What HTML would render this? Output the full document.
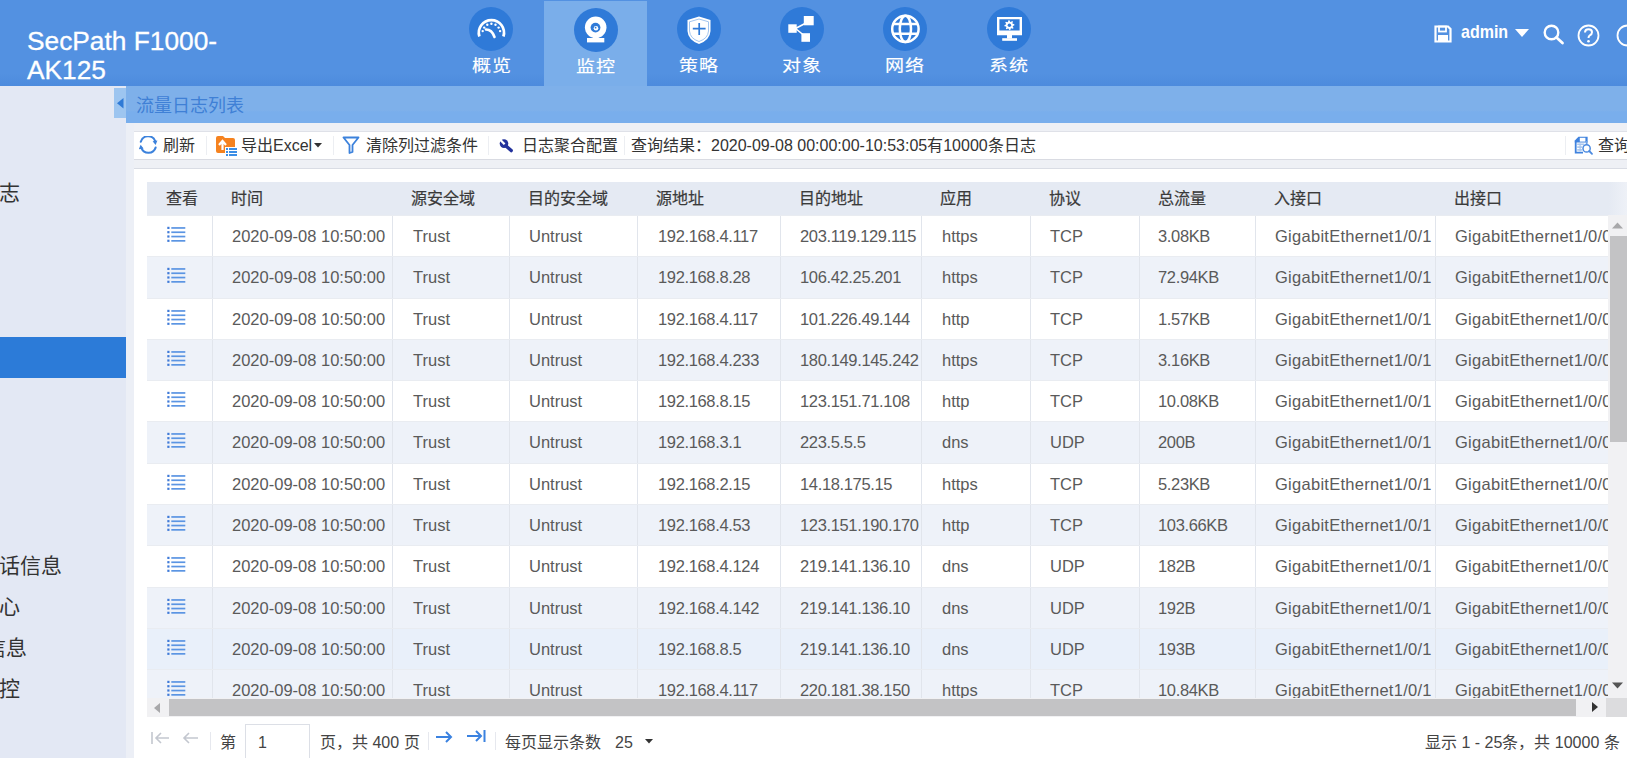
<!DOCTYPE html>
<html lang="zh-CN"><head><meta charset="utf-8">
<style>
*{box-sizing:border-box;margin:0;padding:0}
html,body{width:1627px;height:758px;overflow:hidden;background:#eef0f5;font-family:"Liberation Sans",sans-serif;color:#333}
.a{position:absolute}
#hdr{position:absolute;left:0;top:0;width:1627px;height:86px;background:linear-gradient(#5391e1 0,#5391e1 85%,#4d8bdd 100%)}
#logo{position:absolute;left:27px;top:27px;color:#fff;font-size:26.3px;line-height:28.5px;-webkit-text-stroke:0.3px #fff;white-space:nowrap}
.nav{position:absolute;top:0;width:103px;height:86px;color:#fff}
.nav.act{background:#7aaeea;top:1px;height:85px}
.nav .ic{position:absolute;left:29px;top:7px;width:44px;height:44px;border-radius:50%;background:#2f7ad8}
.nav .ic svg{position:absolute;left:0;top:0}
.nav .lb{position:absolute;left:0;width:103px;top:54px;font-size:18.5px;line-height:24px;text-align:center;font-weight:normal;-webkit-text-stroke:0.15px #fff;transform:scale(1.03,0.86);transform-origin:50% 10px}
#side{position:absolute;left:0;top:86px;width:126px;height:672px;background:#e3e8f4;overflow:hidden}
#side .it{position:absolute;left:0;font-size:21px;line-height:24px;color:#333;white-space:nowrap}
#side .sel{position:absolute;left:0;top:251px;width:126px;height:41px;background:#2c7bd8}
#strip{position:absolute;left:126px;top:123px;width:8px;height:635px;background:#eceff6}
#sub{position:absolute;left:126px;top:86px;width:1501px;height:37px;background:linear-gradient(#7eb0ea 0,#7eb0ea 66%,#79aeec 70%,#79aeec 100%)}
#sub .t{position:absolute;left:10px;top:8px;font-size:18px;line-height:24px;color:#3f80d6}
#tab{position:absolute;left:114px;top:88px;width:12px;height:30px;background:#9dc5f0}
#tb{position:absolute;left:134px;top:131px;width:1493px;height:29px;background:#fff;border-top:1px solid #dfe1e8;border-bottom:1px solid #d9dbe2}
#tb .x{position:absolute;top:2px;font-size:16px;line-height:24px;color:#333;white-space:nowrap}
#tb .sp{position:absolute;top:4px;width:1px;height:19px;background:#eceef2}
#tb svg{position:absolute}
#grid{position:absolute;left:134px;top:168px;width:1493px;height:590px;background:#fff;border-top:1px solid #d9dce4}
#thead{position:absolute;left:13px;top:13px;width:1480px;height:33px;background:linear-gradient(90deg,#e5eaf3 0,#e5eaf3 1462px,#eef1f7 1480px)}
.th{position:absolute;top:5.5px;font-size:16px;line-height:22px;color:#3a3a3a;white-space:nowrap;-webkit-text-stroke:0.2px #3a3a3a}
#tbody{position:absolute;left:13px;top:46px;width:1461px;height:484px;overflow:hidden}
.tr{position:absolute;left:0;width:1461px;background:#fff;border-top:1px solid #e9ecf1}
.tr.alt{background:#eef2f9}
.tr.hov{background:#e9f0fa}
.td{position:absolute;top:9px;font-size:16.5px;line-height:22px;color:#5a5a5a;white-space:nowrap}
.td .li{position:absolute;left:0;top:1px}
.sep{position:absolute;top:0;width:1px;height:100%;background:#e1e5ec}
#vs{position:absolute;left:1474px;top:46px;width:19px;height:484px;background:#f1f1f3}
#vs .th2{position:absolute;left:2px;top:21px;width:17px;height:206px;background:#c3c3c5}
#hs{position:absolute;left:13px;top:529px;width:1461px;height:19px;background:#f1f1f3}
#hs .th2{position:absolute;left:22px;top:1px;width:1407px;height:17px;background:#c3c3c5}
#corner{position:absolute;left:1472px;top:529px;width:21px;height:19px;background:#dcdcde}
#pg{position:absolute;left:0;top:549px;width:1493px;height:41px}
#pg .x{position:absolute;top:14px;font-size:16px;line-height:22px;color:#444;white-space:nowrap}
#pg .sp{position:absolute;top:14px;width:1px;height:18px;background:#e6e8ee}
#pg svg{position:absolute}

.td.ip{letter-spacing:-0.35px}
.td.ge{letter-spacing:0.27px}

</style></head>
<body>
<div id="hdr">
  <div id="logo">SecPath F1000-<br>AK125</div>
  <div class="nav" style="left:440px"><div class="ic"><svg width="44" height="44" viewBox="0 0 44 44"><path d="M10.4 29.5 A12.6 12.6 0 1 1 34.4 29.5" fill="none" stroke="#fff" stroke-width="2.7"/><path d="M17 22.5 Q23 22.5 25.5 30" fill="none" stroke="#fff" stroke-width="2.6" stroke-linecap="round"/><g fill="#fff"><circle cx="13.7" cy="24.1" r="1.2"/><circle cx="15.2" cy="20.6" r="1.2"/><circle cx="18.3" cy="17.8" r="1.2"/><circle cx="22.4" cy="16.8" r="1.2"/><circle cx="26.5" cy="17.8" r="1.2"/><circle cx="29.6" cy="20.6" r="1.2"/><circle cx="31.1" cy="24.1" r="1.2"/></g></svg></div><div class="lb">概览</div></div>
  <div class="nav act" style="left:544px"><div class="ic" style="left:30px;top:7px"><svg width="44" height="44" viewBox="0 0 44 44"><circle cx="21.7" cy="19.3" r="10.8" fill="#fff"/><circle cx="21.5" cy="19.6" r="4.9" fill="#2f7ad8"/><circle cx="22" cy="20.2" r="2.3" fill="#fff"/><circle cx="21.6" cy="19.7" r="0.9" fill="#2f7ad8"/><rect x="19" y="27" width="5.5" height="4" fill="#fff"/><rect x="13" y="30" width="17.3" height="4.4" fill="#fff"/></svg></div><div class="lb">监控</div></div>
  <div class="nav" style="left:647px"><div class="ic" style="left:30px"><svg width="44" height="44" viewBox="0 0 44 44"><path d="M22 9.5 L33.5 13 L33.5 24 Q33 33 22 37 Q11 33 10.5 24 L10.5 13 Z" fill="#fff"/><path d="M22 12 L31.5 14.8 L31.5 24 Q31 31.5 22 34.5 Q13 31.5 12.5 24 L12.5 14.8 Z" fill="none" stroke="#8bb6ea" stroke-width="0.8"/><path d="M22.2 16 V28 M15.8 21.6 H28.6" stroke="#2f7ad8" stroke-width="1.7"/></svg></div><div class="lb">策略</div></div>
  <div class="nav" style="left:750px"><div class="ic" style="left:30px"><svg width="44" height="44" viewBox="0 0 44 44"><g fill="#fff"><rect x="23.8" y="9" width="9.9" height="9.3"/><rect x="8.3" y="17.3" width="8.4" height="8.5"/><rect x="21.4" y="26.2" width="8.6" height="8.6"/></g><path d="M15.5 21.5 L25 16.5 M15.5 21.5 L23.5 28" stroke="#fff" stroke-width="1.6"/></svg></div><div class="lb">对象</div></div>
  <div class="nav" style="left:853px"><div class="ic" style="left:30px"><svg width="44" height="44" viewBox="0 0 44 44"><g fill="none" stroke="#fff" stroke-width="2.5"><circle cx="22.4" cy="21.9" r="13.2"/><ellipse cx="22.4" cy="21.9" rx="5.6" ry="13.2"/><path d="M9.8 17.1 H35 M9.8 26.7 H35"/></g></svg></div><div class="lb">网络</div></div>
  <div class="nav" style="left:957px"><div class="ic" style="left:29.5px"><svg width="44" height="44" viewBox="0 0 44 44"><path d="M10 10 H35 V28.2 H10 Z M12.4 12.2 V23.6 H32.6 V12.2 Z" fill="#fff" fill-rule="evenodd"/><rect x="20" y="28" width="5" height="3.5" fill="#fff"/><rect x="15.2" y="31.2" width="14.8" height="2.6" fill="#fff"/><path d="M27.31 17.25 L27.40 18.22 L25.93 18.92 L25.72 19.59 L26.55 21.00 L25.92 21.75 L24.39 21.20 L23.76 21.53 L23.35 23.11 L22.38 23.20 L21.68 21.73 L21.01 21.52 L19.60 22.35 L18.85 21.72 L19.40 20.19 L19.07 19.56 L17.49 19.15 L17.40 18.18 L18.87 17.48 L19.08 16.81 L18.25 15.40 L18.88 14.65 L20.41 15.20 L21.04 14.87 L21.45 13.29 L22.42 13.20 L23.12 14.67 L23.79 14.88 L25.20 14.05 L25.95 14.68 L25.40 16.21 L25.73 16.84 Z" fill="#fff"/><circle cx="22.4" cy="18.2" r="1.7" fill="#2f7ad8"/></svg></div><div class="lb">系统</div></div>
  <svg class="a" style="left:1434px;top:25px" width="18" height="18" viewBox="0 0 18 18"><path d="M1.5 1.5 H14 L16.5 4 V16.5 H1.5 Z" fill="none" stroke="#fff" stroke-width="2.2"/><rect x="5" y="1.5" width="7" height="5" fill="none" stroke="#fff" stroke-width="1.8"/><rect x="4" y="10" width="10" height="6.5" fill="#fff"/></svg>
  <div class="a" style="left:1461px;top:22px;font-size:16px;line-height:24px;color:#fff;font-weight:bold;transform:scaleY(1.12);transform-origin:0 100%">admin</div>
  <svg class="a" style="left:1515px;top:29px" width="15" height="9" viewBox="0 0 15 9"><path d="M0 0 H14 L7 8 Z" fill="#fff"/></svg>
  <svg class="a" style="left:1543px;top:24px" width="22" height="21" viewBox="0 0 22 21"><circle cx="8.5" cy="8.5" r="6.8" fill="none" stroke="#fff" stroke-width="2.4"/><path d="M13.5 13.5 L19.5 19" stroke="#fff" stroke-width="2.8" stroke-linecap="round"/></svg>
  <svg class="a" style="left:1577px;top:24px" width="23" height="23" viewBox="0 0 23 23"><circle cx="11.5" cy="11.5" r="10" fill="none" stroke="#fff" stroke-width="1.8"/><path d="M8 8.5 Q8 5.2 11.5 5.2 Q15 5.2 15 8.3 Q15 10.3 12.8 11.3 Q11.5 12 11.5 14" fill="none" stroke="#fff" stroke-width="2"/><circle cx="11.5" cy="17.2" r="1.3" fill="#fff"/></svg>
  <svg class="a" style="left:1616px;top:24px" width="23" height="23" viewBox="0 0 23 23"><circle cx="11.5" cy="11.5" r="10" fill="none" stroke="#fff" stroke-width="1.8"/></svg>
</div>
<div id="side">
  <div class="it" style="left:-1px;top:95px">志</div>
  <div class="sel"></div>
  <div class="it" style="left:-1px;top:468px">话信息</div>
  <div class="it" style="left:-1px;top:509px">心</div>
  <div class="it" style="left:-15px;top:550px">信息</div>
  <div class="it" style="left:-1px;top:591px">控</div>
</div>
<div id="strip"></div>
<div id="sub"><div class="t">流量日志列表</div></div>
<div id="tab"><svg class="a" style="left:3px;top:10px" width="7" height="11" viewBox="0 0 7 11"><path d="M6.5 0 V10.5 L0 5.2 Z" fill="#2f7ad6"/></svg></div>
<div id="tb">
  <svg style="left:5px;top:4px" width="20" height="18" viewBox="0 0 20 18"><g fill="none" stroke="#3c82dc" stroke-width="2.1" stroke-linecap="round"><path d="M1.8 5.8 A7.6 7.6 0 0 1 16.2 5.2"/><path d="M16.6 11.6 A7.6 7.6 0 0 1 2.4 12.2"/></g><path d="M13.6 5.2 L18.4 4.6 L16.6 9 Z" fill="#3c82dc"/><path d="M4.6 12.6 L-0.2 13.2 L1.6 8.8 Z" fill="#3c82dc"/></svg>
  <div class="x" style="left:29px">刷新</div>
  <div class="sp" style="left:72px"></div>
  <svg style="left:82px;top:3px" width="21" height="22" viewBox="0 0 21 22"><path d="M0 3 Q0 1 2 1 H7 L9 3 H17 Q19 3 19 5 V16 Q19 18 17 18 H2 Q0 18 0 16 Z" fill="#f5821f"/><path d="M6.5 15 V7 M3 10 L6.5 6 L10 10" fill="none" stroke="#fff" stroke-width="2.2"/><g fill="#3b8ee6"><rect x="9" y="12" width="12" height="10" fill="#fff"/><rect x="10" y="13" width="2" height="2"/><rect x="13" y="13" width="8" height="2"/><rect x="10" y="16" width="2" height="2"/><rect x="13" y="16" width="8" height="2"/><rect x="10" y="19" width="2" height="2"/><rect x="13" y="19" width="8" height="2"/></g></svg>
  <div class="x" style="left:107px">导出Excel</div>
  <svg style="left:180px;top:11px" width="8" height="5" viewBox="0 0 8 5"><path d="M0 0 H8 L4 4.5 Z" fill="#333"/></svg>
  <div class="sp" style="left:199px"></div>
  <svg style="left:208px;top:4px" width="18" height="18" viewBox="0 0 18 18"><path d="M1.5 1.5 H16.5 L10.5 9 V16 L7.5 17 V9 Z" fill="none" stroke="#3c82dc" stroke-width="1.8" stroke-linejoin="round"/></svg>
  <div class="x" style="left:232px">清除列过滤条件</div>
  <div class="sp" style="left:354px"></div>
  <svg style="left:365px;top:6px" width="15" height="15" viewBox="0 0 15 15"><path d="M6.5 7.5 L12.2 12.6" stroke="#23329c" stroke-width="3.4" stroke-linecap="round"/><circle cx="5" cy="5.6" r="4.3" fill="#23329c"/><path d="M5.6 6.2 L1.2 1.8" stroke="#fff" stroke-width="2.3"/></svg>
  <div class="x" style="left:388px">日志聚合配置</div>
  <div class="sp" style="left:490px"></div>
  <div class="x" style="left:497px">查询结果：2020-09-08 00:00:00-10:53:05有10000条日志</div>
  <div class="sp" style="left:1431px"></div>
  <svg style="left:1440px;top:4px" width="20" height="20" viewBox="0 0 20 20"><path d="M0.8 4.5 L4.5 0.8 H13.6 V6.5 H0.8 Z" fill="#3f82de"/><rect x="5.8" y="1.8" width="5.6" height="3.8" fill="#fff"/><path d="M1.7 5 V16.6 H9" fill="none" stroke="#3f82de" stroke-width="1.8"/><path d="M12.7 5 V8.5" stroke="#6fa2e6" stroke-width="1.8"/><g fill="#a9c6ee"><rect x="3.2" y="7.5" width="7" height="1.6"/><rect x="3.2" y="10.3" width="5" height="1.6"/><rect x="3.2" y="13.1" width="5" height="1.6"/><rect x="5.5" y="7.5" width="1.2" height="8"/></g><circle cx="12.6" cy="12.4" r="3.6" fill="#fff" stroke="#4b8ae0" stroke-width="1.5"/><path d="M15.2 15 L18 17.8" stroke="#4b8ae0" stroke-width="1.8" stroke-linecap="round"/></svg>
  <div class="x" style="left:1464px">查询</div>
</div>
<div id="grid">
<div id="thead"><span class="th" style="left:18.5px">查看</span><span class="th" style="left:83.5px">时间</span><span class="th" style="left:263.5px">源安全域</span><span class="th" style="left:380.5px">目的安全域</span><span class="th" style="left:508.5px">源地址</span><span class="th" style="left:651.5px">目的地址</span><span class="th" style="left:792.5px">应用</span><span class="th" style="left:901.5px">协议</span><span class="th" style="left:1010.5px">总流量</span><span class="th" style="left:1126.5px">入接口</span><span class="th" style="left:1306.5px">出接口</span></div>
<div id="tbody">
<div class="tr" style="top:0px;height:41px"><span class="td" style="left:20px"><svg class="li" width="19" height="16" viewBox="0 0 19 16"><g fill="#3f7ad8"><rect x="0.3" y="0.8" width="2.2" height="2.2"/><rect x="0.3" y="5.1" width="2.2" height="2.2"/><rect x="0.3" y="9.4" width="2.2" height="2.2"/><rect x="0.3" y="13.7" width="2.2" height="2.2"/></g><g fill="#5b95e3"><rect x="4.3" y="1.1" width="14" height="1.7"/><rect x="4.3" y="5.4" width="14" height="1.7"/><rect x="4.3" y="9.7" width="14" height="1.7"/><rect x="4.3" y="14" width="14" height="1.7"/></g></svg></span><span class="sep" style="left:65px"></span><span class="td" style="left:85px">2020-09-08 10:50:00</span><span class="sep" style="left:245px"></span><span class="td" style="left:266px">Trust</span><span class="sep" style="left:362px"></span><span class="td" style="left:382px">Untrust</span><span class="sep" style="left:490px"></span><span class="td ip" style="left:511px">192.168.4.117</span><span class="sep" style="left:633px"></span><span class="td ip" style="left:653px">203.119.129.115</span><span class="sep" style="left:774px"></span><span class="td" style="left:795px">https</span><span class="sep" style="left:883px"></span><span class="td" style="left:903px">TCP</span><span class="sep" style="left:992px"></span><span class="td ip" style="left:1011px">3.08KB</span><span class="sep" style="left:1108px"></span><span class="td ge" style="left:1128px">GigabitEthernet1/0/1</span><span class="sep" style="left:1288px"></span><span class="td ge" style="left:1308px">GigabitEthernet1/0/0</span></div>
<div class="tr alt" style="top:41px;height:42px"><span class="td" style="left:20px"><svg class="li" width="19" height="16" viewBox="0 0 19 16"><g fill="#3f7ad8"><rect x="0.3" y="0.8" width="2.2" height="2.2"/><rect x="0.3" y="5.1" width="2.2" height="2.2"/><rect x="0.3" y="9.4" width="2.2" height="2.2"/><rect x="0.3" y="13.7" width="2.2" height="2.2"/></g><g fill="#5b95e3"><rect x="4.3" y="1.1" width="14" height="1.7"/><rect x="4.3" y="5.4" width="14" height="1.7"/><rect x="4.3" y="9.7" width="14" height="1.7"/><rect x="4.3" y="14" width="14" height="1.7"/></g></svg></span><span class="sep" style="left:65px"></span><span class="td" style="left:85px">2020-09-08 10:50:00</span><span class="sep" style="left:245px"></span><span class="td" style="left:266px">Trust</span><span class="sep" style="left:362px"></span><span class="td" style="left:382px">Untrust</span><span class="sep" style="left:490px"></span><span class="td ip" style="left:511px">192.168.8.28</span><span class="sep" style="left:633px"></span><span class="td ip" style="left:653px">106.42.25.201</span><span class="sep" style="left:774px"></span><span class="td" style="left:795px">https</span><span class="sep" style="left:883px"></span><span class="td" style="left:903px">TCP</span><span class="sep" style="left:992px"></span><span class="td ip" style="left:1011px">72.94KB</span><span class="sep" style="left:1108px"></span><span class="td ge" style="left:1128px">GigabitEthernet1/0/1</span><span class="sep" style="left:1288px"></span><span class="td ge" style="left:1308px">GigabitEthernet1/0/0</span></div>
<div class="tr" style="top:83px;height:41px"><span class="td" style="left:20px"><svg class="li" width="19" height="16" viewBox="0 0 19 16"><g fill="#3f7ad8"><rect x="0.3" y="0.8" width="2.2" height="2.2"/><rect x="0.3" y="5.1" width="2.2" height="2.2"/><rect x="0.3" y="9.4" width="2.2" height="2.2"/><rect x="0.3" y="13.7" width="2.2" height="2.2"/></g><g fill="#5b95e3"><rect x="4.3" y="1.1" width="14" height="1.7"/><rect x="4.3" y="5.4" width="14" height="1.7"/><rect x="4.3" y="9.7" width="14" height="1.7"/><rect x="4.3" y="14" width="14" height="1.7"/></g></svg></span><span class="sep" style="left:65px"></span><span class="td" style="left:85px">2020-09-08 10:50:00</span><span class="sep" style="left:245px"></span><span class="td" style="left:266px">Trust</span><span class="sep" style="left:362px"></span><span class="td" style="left:382px">Untrust</span><span class="sep" style="left:490px"></span><span class="td ip" style="left:511px">192.168.4.117</span><span class="sep" style="left:633px"></span><span class="td ip" style="left:653px">101.226.49.144</span><span class="sep" style="left:774px"></span><span class="td" style="left:795px">http</span><span class="sep" style="left:883px"></span><span class="td" style="left:903px">TCP</span><span class="sep" style="left:992px"></span><span class="td ip" style="left:1011px">1.57KB</span><span class="sep" style="left:1108px"></span><span class="td ge" style="left:1128px">GigabitEthernet1/0/1</span><span class="sep" style="left:1288px"></span><span class="td ge" style="left:1308px">GigabitEthernet1/0/0</span></div>
<div class="tr alt" style="top:124px;height:41px"><span class="td" style="left:20px"><svg class="li" width="19" height="16" viewBox="0 0 19 16"><g fill="#3f7ad8"><rect x="0.3" y="0.8" width="2.2" height="2.2"/><rect x="0.3" y="5.1" width="2.2" height="2.2"/><rect x="0.3" y="9.4" width="2.2" height="2.2"/><rect x="0.3" y="13.7" width="2.2" height="2.2"/></g><g fill="#5b95e3"><rect x="4.3" y="1.1" width="14" height="1.7"/><rect x="4.3" y="5.4" width="14" height="1.7"/><rect x="4.3" y="9.7" width="14" height="1.7"/><rect x="4.3" y="14" width="14" height="1.7"/></g></svg></span><span class="sep" style="left:65px"></span><span class="td" style="left:85px">2020-09-08 10:50:00</span><span class="sep" style="left:245px"></span><span class="td" style="left:266px">Trust</span><span class="sep" style="left:362px"></span><span class="td" style="left:382px">Untrust</span><span class="sep" style="left:490px"></span><span class="td ip" style="left:511px">192.168.4.233</span><span class="sep" style="left:633px"></span><span class="td ip" style="left:653px">180.149.145.242</span><span class="sep" style="left:774px"></span><span class="td" style="left:795px">https</span><span class="sep" style="left:883px"></span><span class="td" style="left:903px">TCP</span><span class="sep" style="left:992px"></span><span class="td ip" style="left:1011px">3.16KB</span><span class="sep" style="left:1108px"></span><span class="td ge" style="left:1128px">GigabitEthernet1/0/1</span><span class="sep" style="left:1288px"></span><span class="td ge" style="left:1308px">GigabitEthernet1/0/0</span></div>
<div class="tr" style="top:165px;height:41px"><span class="td" style="left:20px"><svg class="li" width="19" height="16" viewBox="0 0 19 16"><g fill="#3f7ad8"><rect x="0.3" y="0.8" width="2.2" height="2.2"/><rect x="0.3" y="5.1" width="2.2" height="2.2"/><rect x="0.3" y="9.4" width="2.2" height="2.2"/><rect x="0.3" y="13.7" width="2.2" height="2.2"/></g><g fill="#5b95e3"><rect x="4.3" y="1.1" width="14" height="1.7"/><rect x="4.3" y="5.4" width="14" height="1.7"/><rect x="4.3" y="9.7" width="14" height="1.7"/><rect x="4.3" y="14" width="14" height="1.7"/></g></svg></span><span class="sep" style="left:65px"></span><span class="td" style="left:85px">2020-09-08 10:50:00</span><span class="sep" style="left:245px"></span><span class="td" style="left:266px">Trust</span><span class="sep" style="left:362px"></span><span class="td" style="left:382px">Untrust</span><span class="sep" style="left:490px"></span><span class="td ip" style="left:511px">192.168.8.15</span><span class="sep" style="left:633px"></span><span class="td ip" style="left:653px">123.151.71.108</span><span class="sep" style="left:774px"></span><span class="td" style="left:795px">http</span><span class="sep" style="left:883px"></span><span class="td" style="left:903px">TCP</span><span class="sep" style="left:992px"></span><span class="td ip" style="left:1011px">10.08KB</span><span class="sep" style="left:1108px"></span><span class="td ge" style="left:1128px">GigabitEthernet1/0/1</span><span class="sep" style="left:1288px"></span><span class="td ge" style="left:1308px">GigabitEthernet1/0/0</span></div>
<div class="tr alt" style="top:206px;height:42px"><span class="td" style="left:20px"><svg class="li" width="19" height="16" viewBox="0 0 19 16"><g fill="#3f7ad8"><rect x="0.3" y="0.8" width="2.2" height="2.2"/><rect x="0.3" y="5.1" width="2.2" height="2.2"/><rect x="0.3" y="9.4" width="2.2" height="2.2"/><rect x="0.3" y="13.7" width="2.2" height="2.2"/></g><g fill="#5b95e3"><rect x="4.3" y="1.1" width="14" height="1.7"/><rect x="4.3" y="5.4" width="14" height="1.7"/><rect x="4.3" y="9.7" width="14" height="1.7"/><rect x="4.3" y="14" width="14" height="1.7"/></g></svg></span><span class="sep" style="left:65px"></span><span class="td" style="left:85px">2020-09-08 10:50:00</span><span class="sep" style="left:245px"></span><span class="td" style="left:266px">Trust</span><span class="sep" style="left:362px"></span><span class="td" style="left:382px">Untrust</span><span class="sep" style="left:490px"></span><span class="td ip" style="left:511px">192.168.3.1</span><span class="sep" style="left:633px"></span><span class="td ip" style="left:653px">223.5.5.5</span><span class="sep" style="left:774px"></span><span class="td" style="left:795px">dns</span><span class="sep" style="left:883px"></span><span class="td" style="left:903px">UDP</span><span class="sep" style="left:992px"></span><span class="td ip" style="left:1011px">200B</span><span class="sep" style="left:1108px"></span><span class="td ge" style="left:1128px">GigabitEthernet1/0/1</span><span class="sep" style="left:1288px"></span><span class="td ge" style="left:1308px">GigabitEthernet1/0/0</span></div>
<div class="tr" style="top:248px;height:41px"><span class="td" style="left:20px"><svg class="li" width="19" height="16" viewBox="0 0 19 16"><g fill="#3f7ad8"><rect x="0.3" y="0.8" width="2.2" height="2.2"/><rect x="0.3" y="5.1" width="2.2" height="2.2"/><rect x="0.3" y="9.4" width="2.2" height="2.2"/><rect x="0.3" y="13.7" width="2.2" height="2.2"/></g><g fill="#5b95e3"><rect x="4.3" y="1.1" width="14" height="1.7"/><rect x="4.3" y="5.4" width="14" height="1.7"/><rect x="4.3" y="9.7" width="14" height="1.7"/><rect x="4.3" y="14" width="14" height="1.7"/></g></svg></span><span class="sep" style="left:65px"></span><span class="td" style="left:85px">2020-09-08 10:50:00</span><span class="sep" style="left:245px"></span><span class="td" style="left:266px">Trust</span><span class="sep" style="left:362px"></span><span class="td" style="left:382px">Untrust</span><span class="sep" style="left:490px"></span><span class="td ip" style="left:511px">192.168.2.15</span><span class="sep" style="left:633px"></span><span class="td ip" style="left:653px">14.18.175.15</span><span class="sep" style="left:774px"></span><span class="td" style="left:795px">https</span><span class="sep" style="left:883px"></span><span class="td" style="left:903px">TCP</span><span class="sep" style="left:992px"></span><span class="td ip" style="left:1011px">5.23KB</span><span class="sep" style="left:1108px"></span><span class="td ge" style="left:1128px">GigabitEthernet1/0/1</span><span class="sep" style="left:1288px"></span><span class="td ge" style="left:1308px">GigabitEthernet1/0/0</span></div>
<div class="tr alt" style="top:289px;height:41px"><span class="td" style="left:20px"><svg class="li" width="19" height="16" viewBox="0 0 19 16"><g fill="#3f7ad8"><rect x="0.3" y="0.8" width="2.2" height="2.2"/><rect x="0.3" y="5.1" width="2.2" height="2.2"/><rect x="0.3" y="9.4" width="2.2" height="2.2"/><rect x="0.3" y="13.7" width="2.2" height="2.2"/></g><g fill="#5b95e3"><rect x="4.3" y="1.1" width="14" height="1.7"/><rect x="4.3" y="5.4" width="14" height="1.7"/><rect x="4.3" y="9.7" width="14" height="1.7"/><rect x="4.3" y="14" width="14" height="1.7"/></g></svg></span><span class="sep" style="left:65px"></span><span class="td" style="left:85px">2020-09-08 10:50:00</span><span class="sep" style="left:245px"></span><span class="td" style="left:266px">Trust</span><span class="sep" style="left:362px"></span><span class="td" style="left:382px">Untrust</span><span class="sep" style="left:490px"></span><span class="td ip" style="left:511px">192.168.4.53</span><span class="sep" style="left:633px"></span><span class="td ip" style="left:653px">123.151.190.170</span><span class="sep" style="left:774px"></span><span class="td" style="left:795px">http</span><span class="sep" style="left:883px"></span><span class="td" style="left:903px">TCP</span><span class="sep" style="left:992px"></span><span class="td ip" style="left:1011px">103.66KB</span><span class="sep" style="left:1108px"></span><span class="td ge" style="left:1128px">GigabitEthernet1/0/1</span><span class="sep" style="left:1288px"></span><span class="td ge" style="left:1308px">GigabitEthernet1/0/0</span></div>
<div class="tr" style="top:330px;height:42px"><span class="td" style="left:20px"><svg class="li" width="19" height="16" viewBox="0 0 19 16"><g fill="#3f7ad8"><rect x="0.3" y="0.8" width="2.2" height="2.2"/><rect x="0.3" y="5.1" width="2.2" height="2.2"/><rect x="0.3" y="9.4" width="2.2" height="2.2"/><rect x="0.3" y="13.7" width="2.2" height="2.2"/></g><g fill="#5b95e3"><rect x="4.3" y="1.1" width="14" height="1.7"/><rect x="4.3" y="5.4" width="14" height="1.7"/><rect x="4.3" y="9.7" width="14" height="1.7"/><rect x="4.3" y="14" width="14" height="1.7"/></g></svg></span><span class="sep" style="left:65px"></span><span class="td" style="left:85px">2020-09-08 10:50:00</span><span class="sep" style="left:245px"></span><span class="td" style="left:266px">Trust</span><span class="sep" style="left:362px"></span><span class="td" style="left:382px">Untrust</span><span class="sep" style="left:490px"></span><span class="td ip" style="left:511px">192.168.4.124</span><span class="sep" style="left:633px"></span><span class="td ip" style="left:653px">219.141.136.10</span><span class="sep" style="left:774px"></span><span class="td" style="left:795px">dns</span><span class="sep" style="left:883px"></span><span class="td" style="left:903px">UDP</span><span class="sep" style="left:992px"></span><span class="td ip" style="left:1011px">182B</span><span class="sep" style="left:1108px"></span><span class="td ge" style="left:1128px">GigabitEthernet1/0/1</span><span class="sep" style="left:1288px"></span><span class="td ge" style="left:1308px">GigabitEthernet1/0/0</span></div>
<div class="tr alt" style="top:372px;height:41px"><span class="td" style="left:20px"><svg class="li" width="19" height="16" viewBox="0 0 19 16"><g fill="#3f7ad8"><rect x="0.3" y="0.8" width="2.2" height="2.2"/><rect x="0.3" y="5.1" width="2.2" height="2.2"/><rect x="0.3" y="9.4" width="2.2" height="2.2"/><rect x="0.3" y="13.7" width="2.2" height="2.2"/></g><g fill="#5b95e3"><rect x="4.3" y="1.1" width="14" height="1.7"/><rect x="4.3" y="5.4" width="14" height="1.7"/><rect x="4.3" y="9.7" width="14" height="1.7"/><rect x="4.3" y="14" width="14" height="1.7"/></g></svg></span><span class="sep" style="left:65px"></span><span class="td" style="left:85px">2020-09-08 10:50:00</span><span class="sep" style="left:245px"></span><span class="td" style="left:266px">Trust</span><span class="sep" style="left:362px"></span><span class="td" style="left:382px">Untrust</span><span class="sep" style="left:490px"></span><span class="td ip" style="left:511px">192.168.4.142</span><span class="sep" style="left:633px"></span><span class="td ip" style="left:653px">219.141.136.10</span><span class="sep" style="left:774px"></span><span class="td" style="left:795px">dns</span><span class="sep" style="left:883px"></span><span class="td" style="left:903px">UDP</span><span class="sep" style="left:992px"></span><span class="td ip" style="left:1011px">192B</span><span class="sep" style="left:1108px"></span><span class="td ge" style="left:1128px">GigabitEthernet1/0/1</span><span class="sep" style="left:1288px"></span><span class="td ge" style="left:1308px">GigabitEthernet1/0/0</span></div>
<div class="tr hov" style="top:413px;height:41px"><span class="td" style="left:20px"><svg class="li" width="19" height="16" viewBox="0 0 19 16"><g fill="#3f7ad8"><rect x="0.3" y="0.8" width="2.2" height="2.2"/><rect x="0.3" y="5.1" width="2.2" height="2.2"/><rect x="0.3" y="9.4" width="2.2" height="2.2"/><rect x="0.3" y="13.7" width="2.2" height="2.2"/></g><g fill="#5b95e3"><rect x="4.3" y="1.1" width="14" height="1.7"/><rect x="4.3" y="5.4" width="14" height="1.7"/><rect x="4.3" y="9.7" width="14" height="1.7"/><rect x="4.3" y="14" width="14" height="1.7"/></g></svg></span><span class="sep" style="left:65px"></span><span class="td" style="left:85px">2020-09-08 10:50:00</span><span class="sep" style="left:245px"></span><span class="td" style="left:266px">Trust</span><span class="sep" style="left:362px"></span><span class="td" style="left:382px">Untrust</span><span class="sep" style="left:490px"></span><span class="td ip" style="left:511px">192.168.8.5</span><span class="sep" style="left:633px"></span><span class="td ip" style="left:653px">219.141.136.10</span><span class="sep" style="left:774px"></span><span class="td" style="left:795px">dns</span><span class="sep" style="left:883px"></span><span class="td" style="left:903px">UDP</span><span class="sep" style="left:992px"></span><span class="td ip" style="left:1011px">193B</span><span class="sep" style="left:1108px"></span><span class="td ge" style="left:1128px">GigabitEthernet1/0/1</span><span class="sep" style="left:1288px"></span><span class="td ge" style="left:1308px">GigabitEthernet1/0/0</span></div>
<div class="tr alt" style="top:454px;height:42px"><span class="td" style="left:20px"><svg class="li" width="19" height="16" viewBox="0 0 19 16"><g fill="#3f7ad8"><rect x="0.3" y="0.8" width="2.2" height="2.2"/><rect x="0.3" y="5.1" width="2.2" height="2.2"/><rect x="0.3" y="9.4" width="2.2" height="2.2"/><rect x="0.3" y="13.7" width="2.2" height="2.2"/></g><g fill="#5b95e3"><rect x="4.3" y="1.1" width="14" height="1.7"/><rect x="4.3" y="5.4" width="14" height="1.7"/><rect x="4.3" y="9.7" width="14" height="1.7"/><rect x="4.3" y="14" width="14" height="1.7"/></g></svg></span><span class="sep" style="left:65px"></span><span class="td" style="left:85px">2020-09-08 10:50:00</span><span class="sep" style="left:245px"></span><span class="td" style="left:266px">Trust</span><span class="sep" style="left:362px"></span><span class="td" style="left:382px">Untrust</span><span class="sep" style="left:490px"></span><span class="td ip" style="left:511px">192.168.4.117</span><span class="sep" style="left:633px"></span><span class="td ip" style="left:653px">220.181.38.150</span><span class="sep" style="left:774px"></span><span class="td" style="left:795px">https</span><span class="sep" style="left:883px"></span><span class="td" style="left:903px">TCP</span><span class="sep" style="left:992px"></span><span class="td ip" style="left:1011px">10.84KB</span><span class="sep" style="left:1108px"></span><span class="td ge" style="left:1128px">GigabitEthernet1/0/1</span><span class="sep" style="left:1288px"></span><span class="td ge" style="left:1308px">GigabitEthernet1/0/0</span></div>
</div>
<div id="vs"><svg class="a" style="left:4px;top:7px" width="11" height="7" viewBox="0 0 11 7"><path d="M0 6.5 H11 L5.5 0.5 Z" fill="#a8a8aa"/></svg><div class="th2"></div><svg class="a" style="left:4px;top:467px" width="11" height="7" viewBox="0 0 11 7"><path d="M0 0.5 H11 L5.5 6.5 Z" fill="#555"/></svg></div>
<div id="hs"><svg class="a" style="left:7px;top:5px" width="6" height="10" viewBox="0 0 6 10"><path d="M6 0 V10 L0 5 Z" fill="#a8a8aa"/></svg><div class="th2"></div><svg class="a" style="left:1445px;top:4px" width="6" height="10" viewBox="0 0 6 10"><path d="M0 0 V10 L6 5 Z" fill="#333"/></svg></div>
<div id="corner"></div>
<div id="pg">
  <svg style="left:17px;top:14px" width="19" height="12" viewBox="0 0 19 12"><path d="M1 0 V12 M18 6 H5 M10 1 L5 6 L10 11" fill="none" stroke="#c3c7cf" stroke-width="1.6"/></svg>
  <svg style="left:48px;top:14px" width="16" height="12" viewBox="0 0 16 12"><path d="M16 6 H2 M7 1 L2 6 L7 11" fill="none" stroke="#c3c7cf" stroke-width="1.6"/></svg>
  <div class="sp" style="left:76px"></div>
  <div class="x" style="left:86px">第</div>
  <div class="a" style="left:111px;top:6px;width:65px;height:40px;border:1px solid #dcdfe6;background:#fff"></div>
  <div class="x" style="left:124px">1</div>
  <div class="x" style="left:186px">页，共 400 页</div>
  <div class="sp" style="left:294px"></div>
  <svg style="left:302px;top:13px" width="17" height="12" viewBox="0 0 17 12"><path d="M0 6 H15 M10 1 L15 6 L10 11" fill="none" stroke="#3b82e0" stroke-width="2"/></svg>
  <svg style="left:333px;top:12px" width="19" height="12" viewBox="0 0 19 12"><path d="M0 6 H14 M9 1 L14 6 L9 11 M17.5 0 V12" fill="none" stroke="#3b82e0" stroke-width="2"/></svg>
  <div class="sp" style="left:361px"></div>
  <div class="x" style="left:371px">每页显示条数</div>
  <div class="x" style="left:481px">25</div>
  <svg style="left:511px;top:21px" width="8" height="5" viewBox="0 0 8 5"><path d="M0 0 H8 L4 4.5 Z" fill="#333"/></svg>
  <div class="x" style="left:1291px">显示 1 - 25条，共 10000 条</div>
</div>
</div>
</body></html>
